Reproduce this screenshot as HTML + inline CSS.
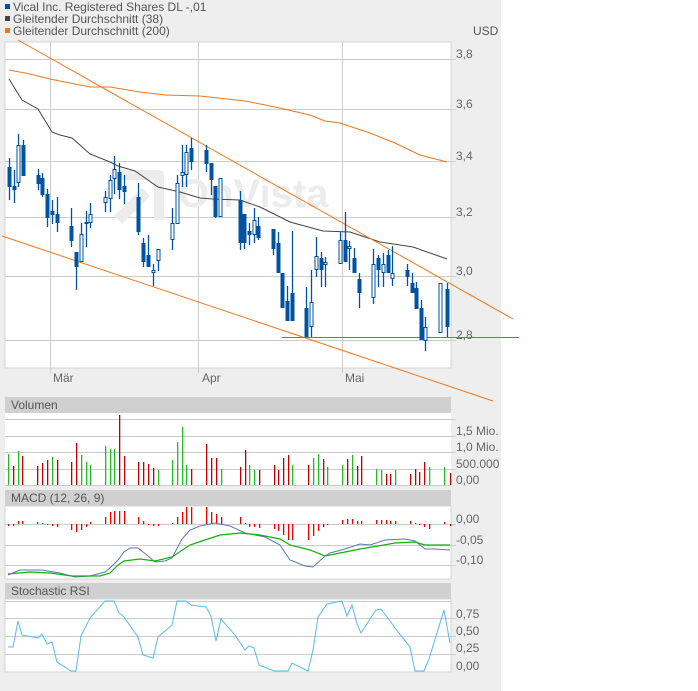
<!DOCTYPE html>
<html><head><meta charset="utf-8">
<style>
html,body{margin:0;padding:0;background:#fff;width:698px;height:691px;overflow:hidden}
svg{display:block}
text{font-family:"Liberation Sans",sans-serif}
</style></head>
<body>
<svg id="s" width="698" height="691" xmlns="http://www.w3.org/2000/svg">
<rect x="0" y="0" width="501" height="691" fill="#eeeeee"/>
<!-- legend -->
<rect x="5" y="4" width="5" height="5" fill="#0053a0"/>
<text x="13" y="11" font-size="12" fill="#555">Vical Inc. Registered Shares DL -,01</text>
<rect x="5" y="16" width="5" height="5" fill="#444"/>
<text x="13" y="23" font-size="12" fill="#555">Gleitender Durchschnitt (38)</text>
<rect x="5" y="28" width="5" height="5" fill="#e87722"/>
<text x="13" y="35" font-size="12" fill="#555">Gleitender Durchschnitt (200)</text>
<text x="473" y="35" font-size="12" fill="#555">USD</text>
<!-- main panel -->
<rect x="5" y="42" width="446" height="326" fill="#fff" stroke="#d4d4d4" stroke-width="1"/>
<g stroke="#cccccc" stroke-width="1">
<line x1="5" y1="59.5" x2="456" y2="59.5"/><line x1="5" y1="109.5" x2="456" y2="109.5"/>
<line x1="5" y1="161.5" x2="456" y2="161.5"/><line x1="5" y1="217.5" x2="456" y2="217.5"/>
<line x1="5" y1="276.5" x2="456" y2="276.5"/><line x1="5" y1="340.5" x2="456" y2="340.5"/>
<line x1="50.5" y1="42" x2="50.5" y2="373"/><line x1="198.5" y1="42" x2="198.5" y2="373"/><line x1="342.5" y1="42" x2="342.5" y2="373"/>
</g>
<g font-size="12" fill="#666">
<text x="456" y="58">3,8</text><text x="456" y="108">3,6</text><text x="456" y="160">3,4</text>
<text x="456" y="216">3,2</text><text x="456" y="275">3,0</text><text x="456" y="339">2,8</text>
<text x="53" y="382">Mär</text><text x="202" y="382">Apr</text><text x="345" y="382">Mai</text>
</g>
<!-- watermark -->
<g fill="#ececec">
<path d="M118 170 h40 q6 0 6 6 v44 h-10 v-40 h-36 z"/>
<path d="M114 216 l28 -28 8 8 -28 28 z"/>
<text x="178" y="207" font-size="40" font-weight="bold" fill="#ececec">OnVista</text>
</g>
<g id="main"></g>
<!-- volume -->
<rect x="5" y="397" width="446" height="16" fill="#d0d0d0"/>
<text x="11" y="409" font-size="12" fill="#555">Volumen</text>
<rect x="5" y="413" width="446" height="73" fill="#fff"/>
<g stroke="#cccccc"><line x1="5" y1="419.5" x2="456" y2="419.5"/><line x1="5" y1="436.5" x2="456" y2="436.5"/><line x1="5" y1="452.5" x2="456" y2="452.5"/><line x1="5" y1="469.5" x2="456" y2="469.5"/><line x1="5" y1="485.5" x2="451" y2="485.5"/></g>
<g font-size="12" fill="#666"><text x="456" y="435">1,5 Mio.</text><text x="456" y="451">1,0 Mio.</text><text x="456" y="468">500.000</text><text x="456" y="484">0,00</text></g>
<g id="vol"></g>
<!-- macd -->
<rect x="5" y="490" width="446" height="16" fill="#d0d0d0"/>
<text x="11" y="502" font-size="12" fill="#555">MACD (12, 26, 9)</text>
<rect x="5" y="506" width="446" height="73" fill="#fff" stroke="#d4d4d4"/>
<g stroke="#cccccc"><line x1="5" y1="524.5" x2="456" y2="524.5"/><line x1="5" y1="545.5" x2="456" y2="545.5"/><line x1="5" y1="565.5" x2="456" y2="565.5"/></g>
<g font-size="12" fill="#666"><text x="456" y="523">0,00</text><text x="456" y="544">-0,05</text><text x="456" y="564">-0,10</text></g>
<g id="macd"></g>
<!-- stoch -->
<rect x="5" y="583" width="446" height="16" fill="#d0d0d0"/>
<text x="11" y="595" font-size="12" fill="#555">Stochastic RSI</text>
<rect x="5" y="599" width="446" height="73" fill="#fff" stroke="#d4d4d4"/>
<g stroke="#cccccc"><line x1="5" y1="601.5" x2="451" y2="601.5"/><line x1="5" y1="618.5" x2="456" y2="618.5"/><line x1="5" y1="636.5" x2="456" y2="636.5"/><line x1="5" y1="654.5" x2="456" y2="654.5"/></g>
<g font-size="12" fill="#666"><text x="456" y="618">0,75</text><text x="456" y="635">0,50</text><text x="456" y="652">0,25</text><text x="456" y="670">0,00</text></g>
<g id="st"></g>
</svg>
<script>
var NS="http://www.w3.org/2000/svg";
function el(p,t,a){var e=document.createElementNS(NS,t);for(var k in a)e.setAttribute(k,a[k]);document.getElementById(p).appendChild(e);return e;}
function pl(p,pts,c,w){el(p,"polyline",{points:pts.map(function(q){return q.join(",")}).join(" "),fill:"none",stroke:c,"stroke-width":w||1});}
pl("main",[[9,70],[30,74],[50,79],[90,87],[110,87],[140,92],[165,95],[200,96],[245,101],[275,107],[310,115],[325,121],[340,123],[370,133],[395,143],[420,155],[447,162]],"#e87722");
pl("main",[[9,79],[22,100],[38,109],[52,132],[60,135],[72,138],[90,154],[110,162],[118,166],[135,171],[158,187],[180,192],[200,198],[213,199],[240,200],[260,207],[290,222],[323,231],[350,232],[380,242],[413,247],[447,259]],"#444");
el("main","line",{x1:18,y1:40,x2:513,y2:319,stroke:"#f0781e"});
el("main","line",{x1:2,y1:236,x2:493,y2:401,stroke:"#f0781e"});
el("main","line",{x1:282,y1:337.5,x2:519,y2:337.5,stroke:"#9b5aa6"});
var C=[[9,158,200,167,187,1],[14,170,203,186,190,1],[18,134,187,145,183,0],[23,140,176,145,176,1],[38,169,190,175,184,1],[42,173,197,178,195,1],[47,189,227,194,218,1],[52,200,224,211,215,1],[57,197,232,214,223,1],[71,208,247,226,241,1],[76,252,290,252,267,1],[81,223,262,234,262,0],[86,211,247,222,224,0],[90,203,228,214,223,0],[105,191,212,197,203,0],[110,175,212,180,199,0],[114,156,194,169,179,0],[119,163,199,172,190,1],[124,175,204,186,192,1],[138,183,235,197,232,1],[143,238,267,243,262,1],[148,235,267,255,267,1],[153,264,286,270,273,0],[158,249,271,249,261,0],[172,208,250,223,240,0],[177,175,224,183,224,0],[182,145,187,172,176,0],[186,145,187,152,175,0],[191,138,170,148,162,1],[206,145,172,150,164,1],[211,163,195,163,180,1],[215,186,218,186,217,1],[220,178,217,178,217,0],[240,191,250,200,243,1],[244,214,249,214,243,1],[249,223,245,231,235,1],[254,208,243,220,235,0],[258,217,240,226,238,1],[273,229,255,229,249,1],[278,232,273,243,273,1],[282,273,308,273,308,1],[287,286,321,301,321,1],[292,231,321,293,321,1],[306,287,337,308,337,1],[311,270,337,302,327,0],[316,237,277,256,270,0],[321,252,287,258,270,1],[325,257,287,262,265,0],[340,232,264,240,264,0],[345,212,262,240,262,1],[349,241,270,246,249,0],[354,248,273,258,273,1],[359,273,308,279,293,1],[373,249,304,264,298,0],[378,255,287,258,270,1],[383,253,287,264,273,0],[388,250,273,255,273,1],[392,246,286,273,279,0],[407,264,286,270,277,1],[412,273,293,283,293,1],[416,282,309,288,309,1],[421,300,340,308,340,1],[425,317,351,327,341,0],[440,283,333,283,333,0],[447,283,337,289,327,1]];
C.forEach(function(c){var col="#0053a0";el("main","line",{x1:c[0]+.5,y1:c[1],x2:c[0]+.5,y2:c[2],stroke:col,"stroke-width":1.3});
if(c[5])el("main","rect",{x:c[0]-1.5,y:c[3],width:4,height:Math.max(2,c[4]-c[3]),fill:col});
else el("main","rect",{x:c[0]-1,y:c[3]+.5,width:3,height:Math.max(1,c[4]-c[3]-1),fill:"#fff",stroke:col,"stroke-width":1});});
var V=[[8,454,1],[13,466,0],[18,451,1],[22,456,0],[37,466,0],[42,463,0],[47,460,0],[52,457,1],[57,460,0],[71,462,0],[76,443,0],[81,455,1],[86,462,1],[90,465,1],[105,446,1],[110,449,1],[114,449,1],[119,415,0],[124,456,0],[138,462,0],[143,462,0],[148,464,0],[153,468,0],[158,470,1],[172,460,1],[177,442,1],[182,427,1],[186,465,1],[191,469,0],[206,444,0],[211,458,0],[216,458,0],[221,469,1],[240,467,0],[245,450,0],[249,465,1],[254,470,1],[259,470,0],[274,465,0],[278,470,0],[283,458,0],[288,455,0],[292,465,1],[308,465,0],[313,458,1],[318,454,1],[323,459,0],[327,467,1],[342,465,1],[347,459,0],[352,455,1],[357,466,0],[361,456,0],[376,469,1],[381,470,1],[386,474,0],[390,474,0],[395,470,1],[410,474,0],[415,469,0],[419,472,0],[424,462,0],[429,467,1],[444,467,1],[450,473,0]];
V.forEach(function(v){el("vol","rect",{x:v[0],y:v[1],width:1.3,height:485-v[1],fill:v[2]?"#22bb22":"#c00000"});});
var M=[[8,-2],[13,-2],[18,3],[22,3],[37,2],[42,1],[47,-1],[52,-2],[57,-3],[71,-6],[76,-8],[81,-6],[86,-3],[90,2],[105,7],[110,12],[114,13],[119,13],[124,13],[138,7],[143,3],[148,-1],[153,-2],[158,-2],[172,1],[177,7],[182,12],[186,17],[191,17],[206,17],[211,12],[216,10],[221,7],[240,7],[245,1],[249,-3],[254,-3],[259,-4],[274,-5],[278,-7],[283,-11],[288,-16],[292,-16],[308,-16],[313,-12],[318,-7],[323,-3],[327,-1],[342,4],[347,5],[352,5],[357,3],[361,3],[376,4],[381,4],[386,4],[390,3],[395,3],[410,3],[415,1],[419,-1],[424,-3],[429,-5],[444,2],[450,-2]];
M.forEach(function(m){var y=m[1]>0?524-m[1]:524;el("macd","rect",{x:m[0],y:y,width:1.3,height:Math.abs(m[1]),fill:"#ee0000"});});
pl("macd",[[8,575],[20,570],[42,570],[60,573],[75,577],[90,576],[105,572],[110,568],[118,560],[124,552],[130,548],[138,548],[148,556],[155,562],[165,561],[172,558],[182,539],[190,530],[200,526],[215,523],[230,526],[245,533],[265,537],[280,545],[290,560],[305,566],[313,567],[325,556],[330,553],[345,549],[360,544],[370,545],[385,540],[405,539],[415,541],[425,549],[435,549],[450,550]],"#5a78b4");
pl("macd",[[8,574],[30,572],[50,573],[72,576],[100,576],[110,573],[118,565],[124,561],[140,559],[155,561],[172,557],[190,545],[205,540],[220,535],[240,533],[260,535],[280,539],[290,545],[310,550],[325,556],[340,553],[360,549],[378,546],[395,543],[415,542],[425,545],[450,545]],"#11b011",1.2);
pl("st",[[8,647],[13,647],[18,621],[22,635],[38,638],[42,634],[47,644],[52,642],[57,662],[71,671],[76,671],[81,636],[90,618],[105,601],[114,601],[119,613],[124,617],[138,637],[143,655],[153,658],[158,637],[172,625],[177,601],[186,601],[191,605],[206,607],[211,616],[216,641],[221,619],[235,635],[245,650],[249,646],[254,648],[259,665],[274,671],[288,671],[292,663],[308,671],[313,650],[318,617],[327,604],[342,601],[347,616],[352,605],[357,624],[361,633],[376,610],[381,609],[390,621],[395,628],[410,647],[415,671],[424,671],[429,659],[444,610],[450,643]],"#55bbee");
</script>
</body></html>
